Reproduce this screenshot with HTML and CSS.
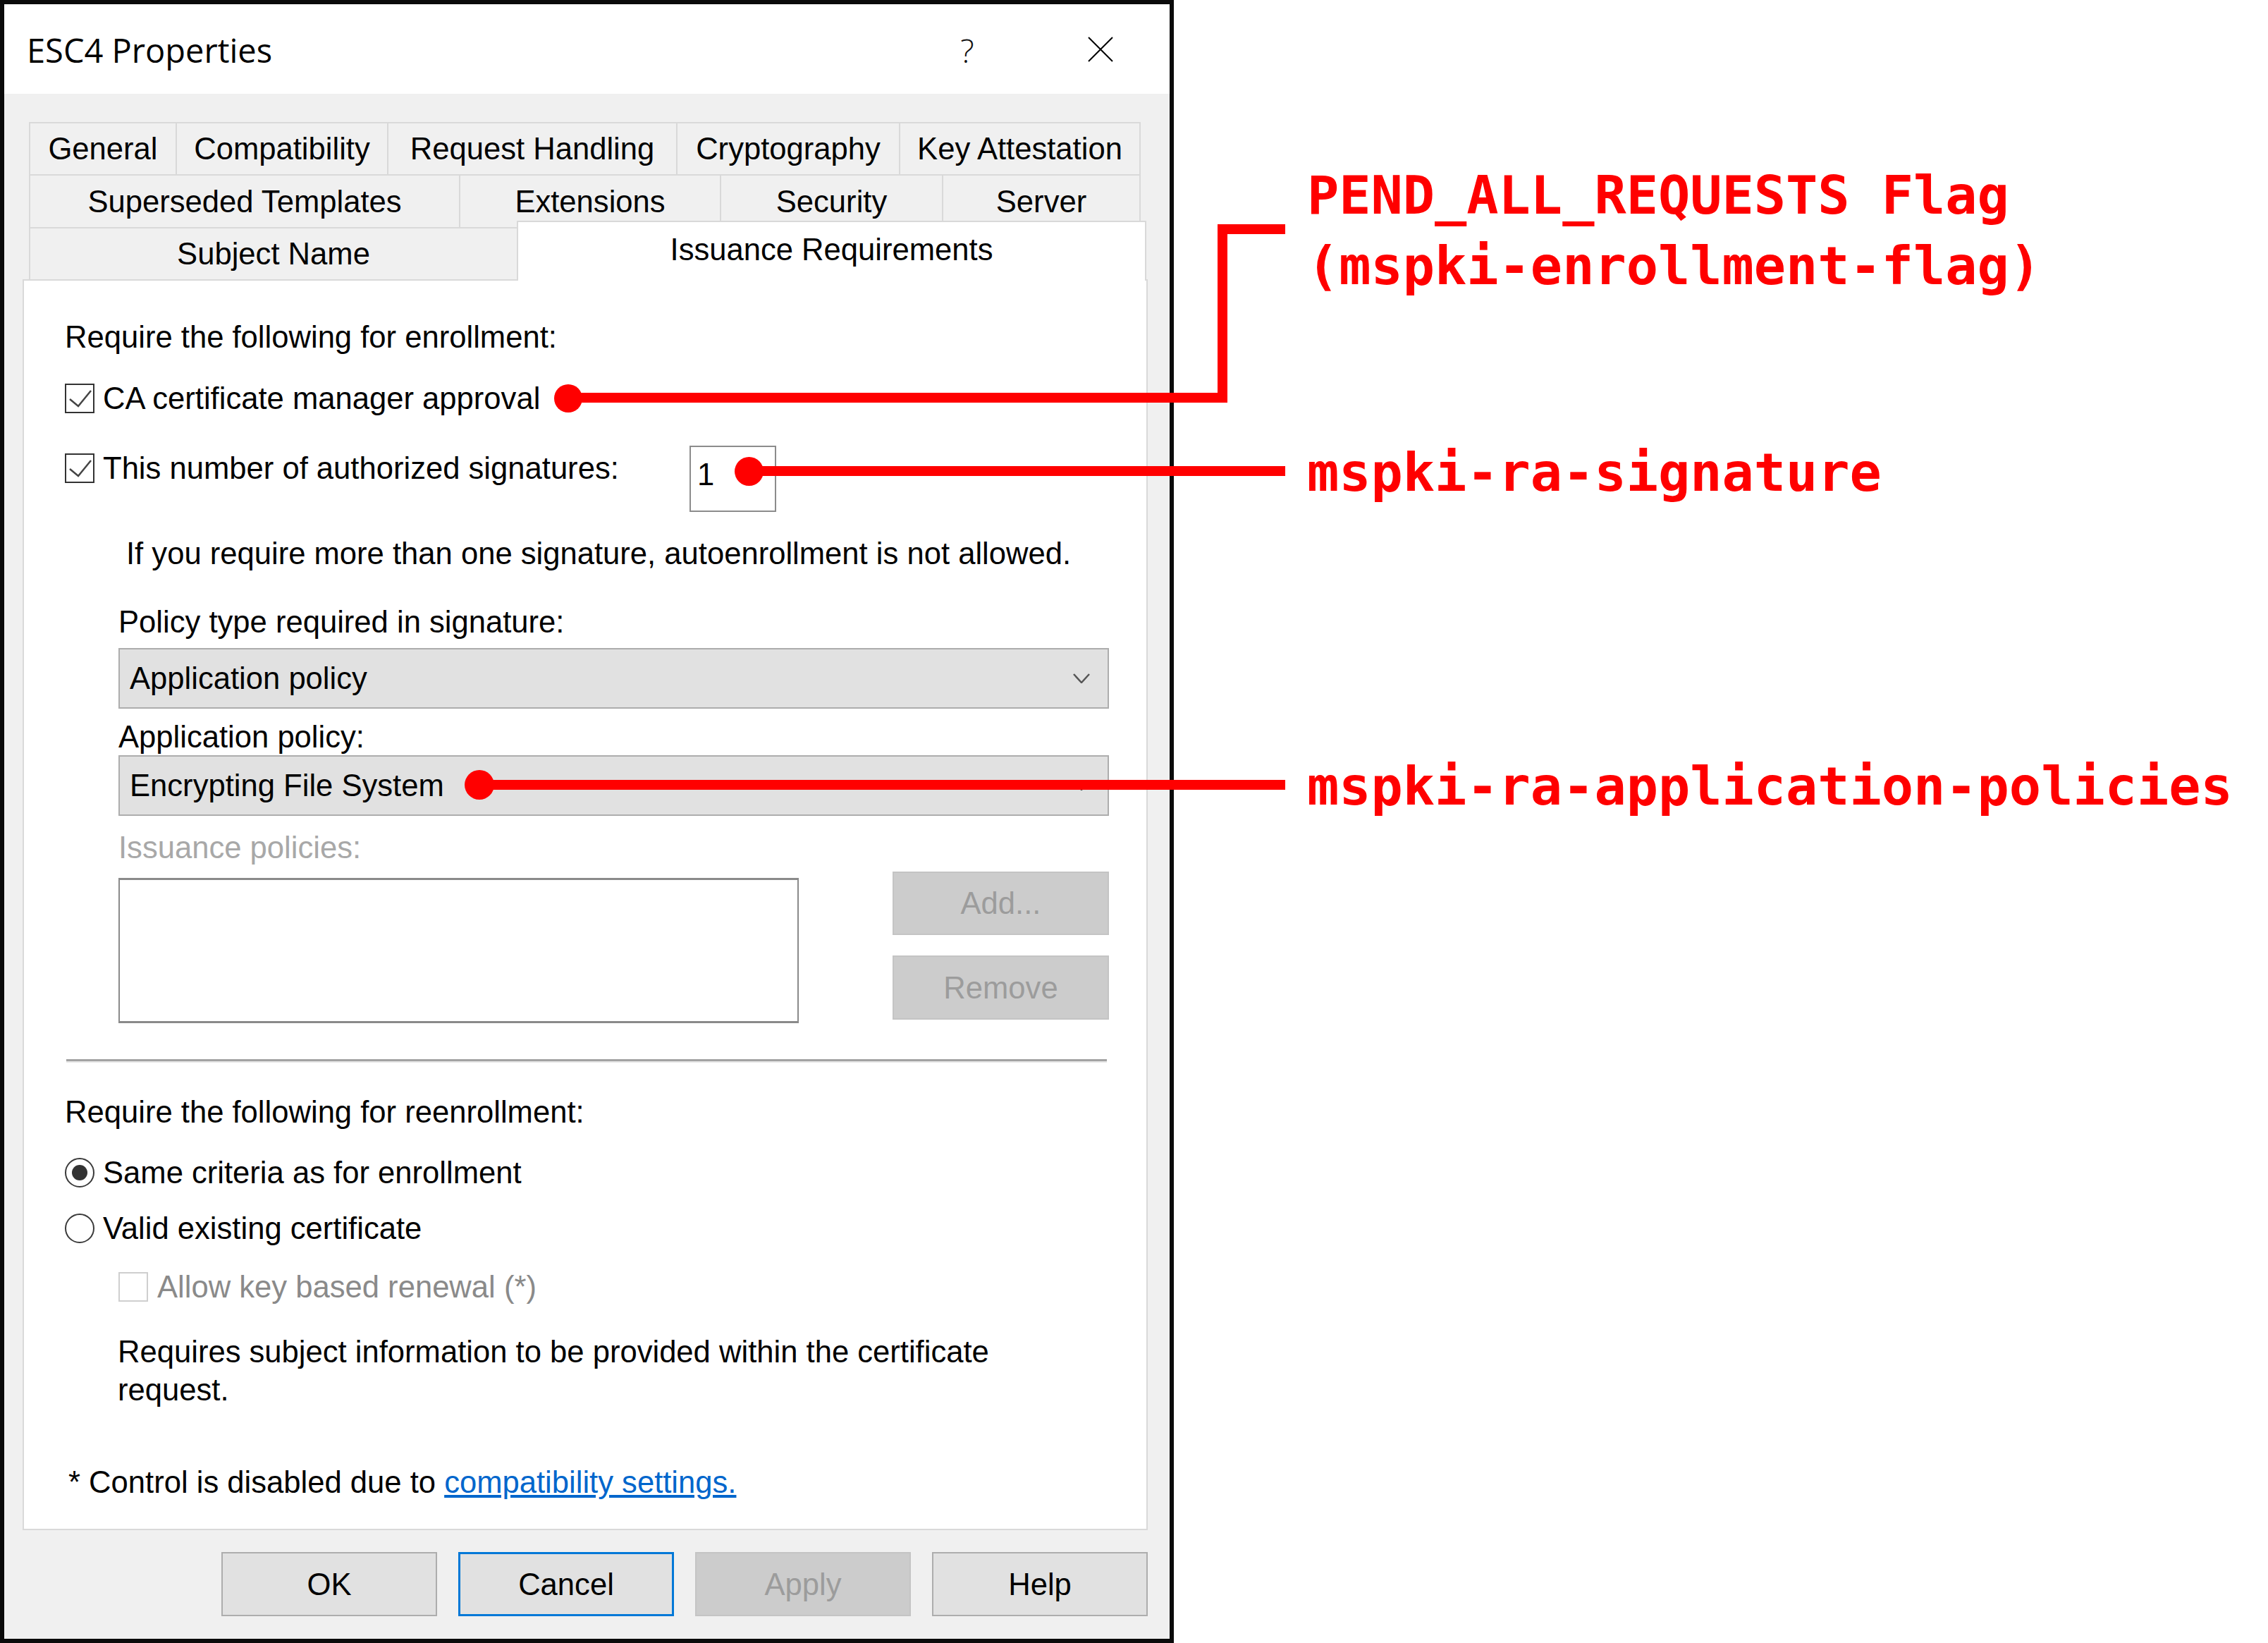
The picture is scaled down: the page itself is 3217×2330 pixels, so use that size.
FILE: index.html
```html
<!DOCTYPE html>
<html lang="en">
<head>
<meta charset="utf-8">
<title>ESC4 Properties</title>
<link rel="stylesheet" href="styles.css">
</head>
<body>
<div class="page">
  <div class="dialog">
    <div class="titlebar">
      <div class="title">ESC4 Properties</div>
      <div class="help">?</div>
      <svg class="close" width="36" height="36" viewBox="0 0 36 36"><path d="M1 1L35 35M35 1L1 35" stroke="#000" stroke-width="2" fill="none"/></svg>
    </div>
    <div class="body">
      <div class="tabs">
        <div class="tabrow r1">
          <div class="tab t-general">General</div>
          <div class="tab t-compat">Compatibility</div>
          <div class="tab t-request">Request Handling</div>
          <div class="tab t-crypto">Cryptography</div>
          <div class="tab t-key last">Key Attestation</div>
        </div>
        <div class="tabrow r2">
          <div class="tab t-super">Superseded Templates</div>
          <div class="tab t-ext">Extensions</div>
          <div class="tab t-sec">Security</div>
          <div class="tab t-server last">Server</div>
        </div>
        <div class="tabrow r3">
          <div class="tab t-subject">Subject Name</div>
          <div class="tab selected">Issuance Requirements</div>
        </div>
      </div>
      <div class="panel">
        <div class="line mt55">Require the following for enrollment:</div>
        <div class="check-row mt37">
          <span class="cb"><svg width="38" height="38" viewBox="0 0 38 38"><path d="M5 20L17 30L35 8" stroke="#444" stroke-width="2.5" fill="none"/></svg></span>
          <span>CA certificate manager approval</span>
        </div>
        <div class="sig-row">
          <div class="check-row sig-label">
            <span class="cb"><svg width="38" height="38" viewBox="0 0 38 38"><path d="M5 20L17 30L35 8" stroke="#444" stroke-width="2.5" fill="none"/></svg></span>
            <span>This number of authorized signatures:</span>
          </div>
          <div class="numbox">1</div>
        </div>
        <div class="line note">If you require more than one signature, autoenrollment is not allowed.</div>
        <div class="indent">
          <div class="line mt47">Policy type required in signature:</div>
          <div class="combo mt12"><span>Application policy</span><svg class="chev" width="24" height="14" viewBox="0 0 24 14"><path d="M1 1L12 13L23 1" stroke="#555" stroke-width="2.5" fill="none"/></svg></div>
          <div class="line mt15">Application policy:</div>
          <div class="combo mt1"><span>Encrypting File System</span><svg class="chev" width="24" height="14" viewBox="0 0 24 14"><path d="M1 1L12 13L23 1" stroke="#555" stroke-width="2.5" fill="none"/></svg></div>
          <div class="line mt20 grey">Issuance policies:</div>
          <div class="list-row">
            <div class="listbox"></div>
            <div class="side-btns">
              <div class="btn disabled add">Add...</div>
              <div class="btn disabled remove">Remove</div>
            </div>
          </div>
        </div>
        <div class="separator"></div>
        <div class="line mt45">Require the following for reenrollment:</div>
        <div class="check-row mt36">
          <span class="radio on"><span class="radio-dot"></span></span>
          <span>Same criteria as for enrollment</span>
        </div>
        <div class="check-row mt29">
          <span class="radio"></span>
          <span>Valid existing certificate</span>
        </div>
        <div class="check-row mt33 sub disabled-row">
          <span class="cb off"></span>
          <span>Allow key based renewal (*)</span>
        </div>
        <div class="wrap-text">Requires subject information to be provided within the certificate request.</div>
        <div class="line footnote">* Control is disabled due to <span class="link">compatibility settings.</span></div>
      </div>
      <div class="buttons">
        <div class="btn">OK</div>
        <div class="btn default">Cancel</div>
        <div class="btn disabled">Apply</div>
        <div class="btn">Help</div>
      </div>
    </div>
  </div>

  <div class="red dot dot1"></div>
  <div class="red bar line1"></div>
  <div class="red bar vline"></div>
  <div class="red bar hline-top"></div>
  <div class="red dot dot2"></div>
  <div class="red bar line2"></div>
  <div class="red dot dot3"></div>
  <div class="red bar line3"></div>

  <div class="ann ann-flag">PEND_ALL_REQUESTS Flag<br>(mspki-enrollment-flag)</div>
  <div class="ann ann-sig">mspki-ra-signature</div>
  <div class="ann ann-app">mspki-ra-application-policies</div>
</div>
</body>
</html>
```

FILE: styles.css
```css
* { box-sizing: border-box; }
html, body { margin: 0; padding: 0; background: #fff; }
body {
  font-family: "Liberation Sans", Arial, sans-serif;
  font-size: 43.6px;
  line-height: 50px;
  color: #000;
}
.page { position: relative; width: 3217px; height: 2330px; overflow: hidden; background: #fff; }

.dialog {
  width: 1665px; height: 2330px;
  border: 6px solid #0a0a0a;
  background: #f0f0f0;
  display: flex; flex-direction: column;
}
.titlebar {
  height: 127px; flex-shrink: 0;
  background: #fff;
  display: flex; align-items: flex-start;
  padding: 33px 80px 0 32px;
}
.title { font-family: "Open Sans", "Noto Sans", sans-serif; font-size: 47px; line-height: 64px; flex: 1; }
.help {
  font-family: "Open Sans", "Noto Sans", sans-serif; font-size: 46px; line-height: 64px;
  font-weight: 300; width: 60px; text-align: center; margin-right: 141px; color: #111;
}
.close { margin-top: 13px; flex-shrink: 0; }

.body { flex: 1; padding: 40px 31px 0 26px; display: flex; flex-direction: column; }

.tabs { margin: 0 10px 0 9px; }
.tabrow { display: flex; height: 74px; }
.tabrow.r2 { height: 75px; }
.tab {
  flex-shrink: 0;
  border-top: 2px solid #d9d9d9;
  border-left: 2px solid #d9d9d9;
  display: flex; align-items: center; justify-content: center;
  white-space: nowrap;
}
.tab.last { border-right: 2px solid #d9d9d9; }
.t-general { width: 208px; }
.t-compat { width: 300px; }
.t-request { width: 410px; }
.t-crypto { width: 316px; }
.t-key { width: 343px; }
.t-super { width: 610px; }
.t-ext { width: 370px; }
.t-sec { width: 315px; }
.t-server { width: 282px; }
.t-subject { width: 692px; }
.tab.selected {
  position: relative; z-index: 2;
  width: 893px; height: 85px;
  margin-top: -9px; margin-bottom: -2px;
  background: #fff;
  border-right: 2px solid #d9d9d9;
  align-items: flex-start; padding-top: 14px;
}

.panel {
  height: 1774px; flex-shrink: 0;
  background: #fff;
  border: 2px solid #d9d9d9;
  padding: 0 53px 0 58px;
}
.line { height: 50px; white-space: nowrap; }
.mt55 { margin-top: 55px; }
.mt37 { margin-top: 37px; }
.mt47 { margin-top: 47px; }
.mt12 { margin-top: 12px; }
.mt15 { margin-top: 15px; }
.mt1 { margin-top: 1px; }
.mt20 { margin-top: 20px; }
.mt45 { margin-top: 45px; }
.mt36 { margin-top: 36px; }
.mt29 { margin-top: 29px; }
.mt33 { margin-top: 33px; }
.grey { color: #a8a8a8; }

.check-row { display: flex; align-items: center; height: 50px; gap: 12px; white-space: nowrap; }
.cb {
  width: 42px; height: 42px; flex-shrink: 0;
  border: 2px solid #333; background: #fff;
  display: flex;
}
.cb.off { border-color: #cfcfcf; }
.sub { padding-left: 76px; gap: 13px; }
.disabled-row { color: #8a8a8a; }

.radio {
  width: 42px; height: 42px; flex-shrink: 0;
  border: 2px solid #3a3a3a; border-radius: 50%; background: #fff;
  display: flex; align-items: center; justify-content: center;
}
.radio-dot { width: 22px; height: 22px; border-radius: 50%; background: #333; }

.sig-row { display: flex; align-items: flex-start; margin-top: 42px; height: 94px; }
.sig-label { width: 886px; flex-shrink: 0; margin-top: 7px; }
.numbox {
  width: 123px; height: 94px;
  border: 2px solid #8c8c8c; background: #fff;
  padding: 14px 0 0 9px;
}

.note { margin-top: 34px; padding-left: 87px; }

.indent { padding-left: 76px; }
.combo {
  height: 86px;
  background: #e1e1e1; border: 2px solid #adadad;
  display: flex; align-items: center; justify-content: space-between;
  padding: 0 25px 0 14px;
}
.chev { flex-shrink: 0; }

.list-row { display: flex; justify-content: space-between; align-items: flex-start; margin-top: 9px; }
.listbox {
  width: 965px; height: 206px; margin-top: 9px;
  background: #fff;
  border: 2px solid #8a8a8a; border-top-width: 3px; border-bottom-width: 3px;
}
.side-btns { width: 307px; display: flex; flex-direction: column; }
.side-btns .add { height: 90px; width: 307px; }
.side-btns .remove { height: 91px; width: 307px; margin-top: 29px; }

.separator {
  margin-top: 51px; margin-left: 2px;
  width: 1476px; height: 5px;
  border-top: 3px solid #a3a3a3; border-bottom: 2px solid #e6e6e6;
}

.wrap-text { margin-top: 40px; padding-left: 75px; width: 1375px; line-height: 54px; }
.footnote { margin-top: 79px; padding-left: 5px; }
.link { color: #0066cc; text-decoration: underline; }

.buttons { display: flex; justify-content: flex-end; gap: 30px; margin-top: 31px; }
.btn {
  width: 306px; height: 91px;
  background: #e1e1e1; border: 2px solid #adadad;
  display: flex; align-items: center; justify-content: center;
  white-space: nowrap;
}
.btn.default { border: 3px solid #0078d7; }
.btn.disabled { background: #cccccc; border-color: #c4c4c4; color: #9c9c9c; }

.red { position: absolute; background: #ff0000; }
.dot { border-radius: 50%; }
.dot1 { left: 786px; top: 545px; width: 40px; height: 40px; }
.line1 { left: 806px; top: 557px; width: 935px; height: 14px; }
.vline { left: 1727px; top: 318px; width: 14px; height: 253px; }
.hline-top { left: 1727px; top: 318px; width: 96px; height: 14px; }
.dot2 { left: 1042px; top: 648px; width: 41px; height: 41px; }
.line2 { left: 1062px; top: 661px; width: 761px; height: 14px; }
.dot3 { left: 659px; top: 1092px; width: 42px; height: 42px; }
.line3 { left: 680px; top: 1106px; width: 1143px; height: 14px; }

.ann {
  position: absolute; left: 1854px;
  font-family: "DejaVu Sans Mono", "Liberation Mono", monospace;
  font-weight: bold; font-size: 75.2px; line-height: 100px;
  color: #ff0000; white-space: nowrap;
}
.ann-flag { top: 227px; }
.ann-sig { top: 620px; }
.ann-app { top: 1065px; }
```
